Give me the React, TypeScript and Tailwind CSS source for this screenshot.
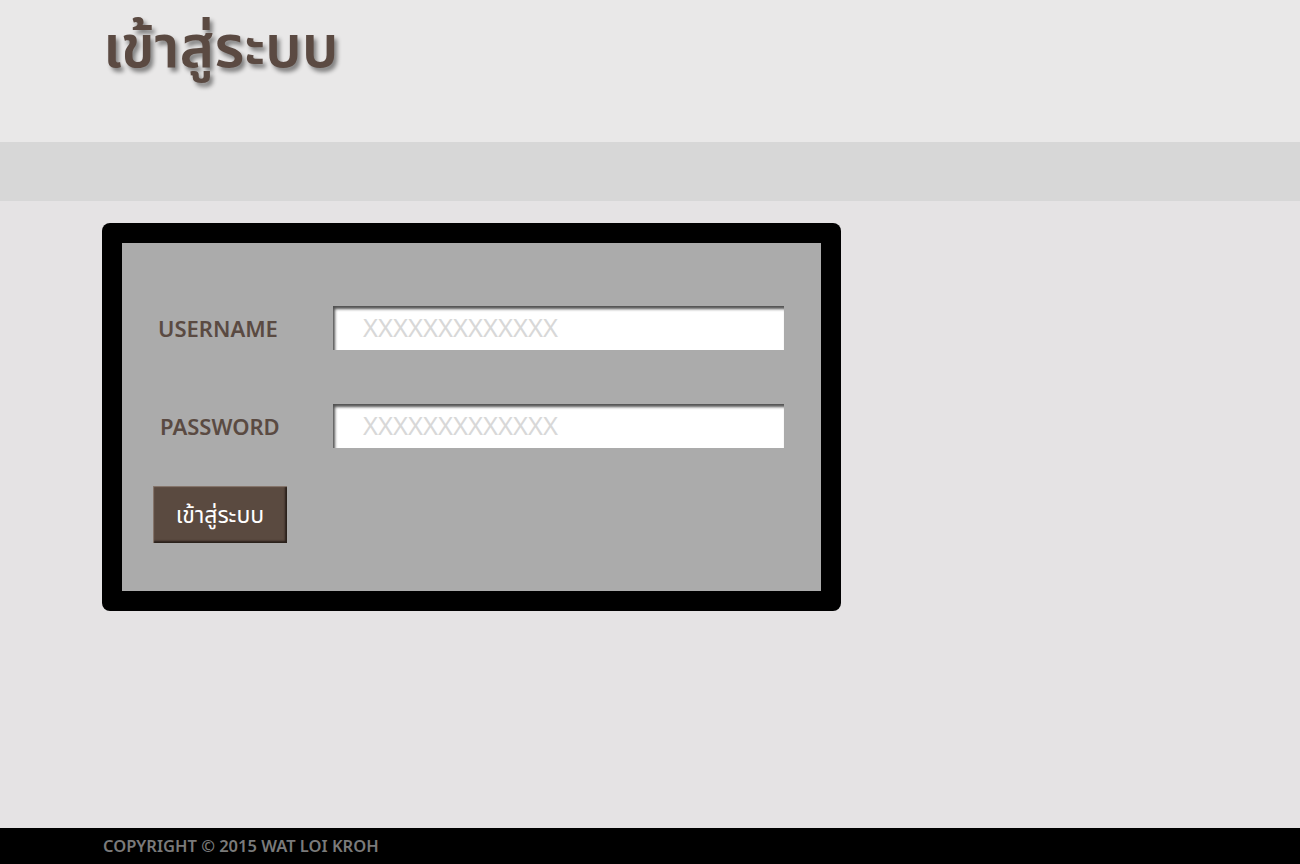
export default function App() {
  const font = { fontFamily: '"Noto Sans", "Noto Sans Thai", Tahoma, "DejaVu Sans", sans-serif' };
  return (
    <div className="min-h-[864px] flex flex-col bg-[#e5e3e4]" style={font}>
      <header className="h-[142px] bg-[#e9e8e8] px-[103px] pt-[7px]">
        <h1 className="text-[59px] font-semibold leading-[74px] text-[#5b4a42] [text-shadow:3px_4px_4px_rgba(0,0,0,0.45)]">เข้าสู่ระบบ</h1>
      </header>
      <nav className="h-[59px] bg-[#d7d7d7]" />
      <main className="flex-1 px-[102px] pt-[22px]">
        <div className="w-[739px] h-[388px] bg-black rounded-[8px] p-[20px]">
          <div className="h-full bg-[#ababab] pt-[63px] pl-[31px]">
            <div className="flex items-center h-[44px]">
              <label className="w-[180px] pl-[5px] text-[22px] font-semibold text-[#5a4a42]">USERNAME</label>
              <div className="w-[451px] h-[44px] bg-white shadow-[inset_2px_3px_3px_#505050] flex items-center pl-[30px] text-[25.6px] text-[#d8d8d8]">XXXXXXXXXXXXX</div>
            </div>
            <div className="flex items-center h-[44px] mt-[54px]">
              <label className="w-[180px] pl-[7px] text-[22px] font-semibold text-[#5a4a42]">PASSWORD</label>
              <div className="w-[451px] h-[44px] bg-white shadow-[inset_2px_3px_3px_#505050] flex items-center pl-[30px] text-[25.6px] text-[#d8d8d8]">XXXXXXXXXXXXX</div>
            </div>
            <button className="mt-[38px] w-[134px] h-[57px] bg-[#5a4a40] text-white text-[23px] shadow-[inset_1px_1px_1px_#8a7a70,inset_-2px_-2px_2px_#2a201b]">เข้าสู่ระบบ</button>
          </div>
        </div>
      </main>
      <footer className="h-[36px] bg-black px-[103px] flex items-center">
        <span className="text-[16.5px] font-semibold text-[#7a7a7a]">COPYRIGHT © 2015 WAT LOI KROH</span>
      </footer>
    </div>
  );
}
